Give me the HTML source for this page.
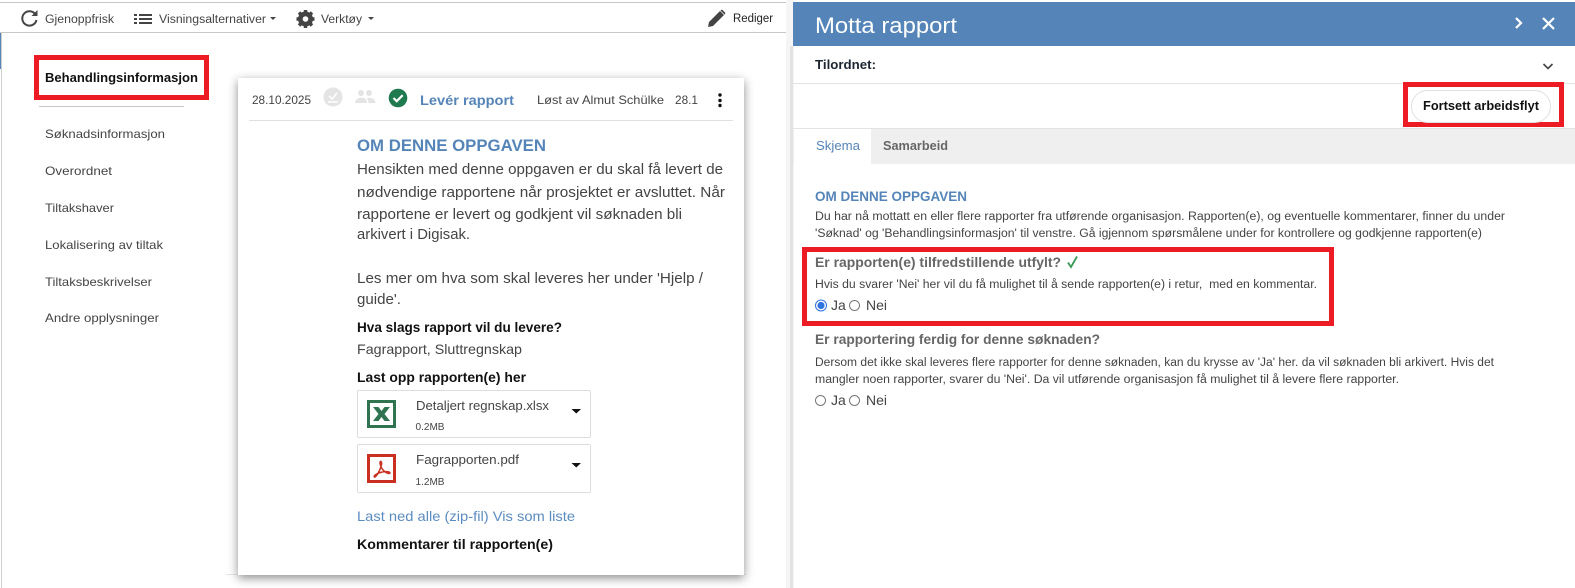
<!DOCTYPE html>
<html lang="no"><head><meta charset="utf-8"><title>Motta rapport</title>
<style>
html,body{margin:0;padding:0;background:#fff;width:1575px;height:588px;overflow:hidden}
svg{display:block}
text{font-family:"Liberation Sans",sans-serif;fill:#444;white-space:pre}
.b{font-weight:bold}
</style></head><body>
<svg width="1575" height="588" viewBox="0 0 1575 588" xmlns="http://www.w3.org/2000/svg">
<defs>
<filter id="sh" x="-10%" y="-10%" width="120%" height="120%"><feDropShadow dx="0" dy="3" stdDeviation="5" flood-color="#000" flood-opacity=".45"/></filter>
</defs>
<rect width="1575" height="588" fill="#fff"/>
<!-- left panel frame -->
<rect x="0" y="2" width="786" height="1" fill="#c8c8c8"/>
<rect x="0" y="32" width="786" height="1" fill="#c8c8c8"/>
<rect x="1" y="33" width="1" height="555" fill="#d0d0d0"/>
<rect x="0" y="33" width="1" height="36" fill="#5585b8"/>
<rect x="786" y="0" width="8" height="588" fill="#f5f5f5"/>
<rect x="790" y="46" width="3" height="542" fill="#e3e3e3"/>
<!-- toolbar -->
<path d="M35.500 14.500A7.200 7.200 0 1 0 36.500 20" fill="none" stroke="#444" stroke-width="2"/><path d="M31.500 16h6v-6z" fill="#444"/>
<text x="45" y="23" font-size="11.5" textLength="69" lengthAdjust="spacingAndGlyphs">Gjenoppfrisk</text>
<g fill="#444"><rect x="134" y="14" width="3" height="2"/><rect x="139" y="14" width="13" height="2"/><rect x="134" y="18" width="3" height="2"/><rect x="139" y="18" width="13" height="2"/><rect x="134" y="22" width="3" height="2"/><rect x="139" y="22" width="13" height="2"/></g>
<text x="159" y="23" font-size="11.5" textLength="107" lengthAdjust="spacingAndGlyphs">Visningsalternativer</text>
<path d="M270 17h6l-3 3z" fill="#444"/>
<circle cx="305.500" cy="19" r="5.500" fill="none" stroke="#444" stroke-width="4"/>
<path d="M305.500 10v18M296.500 19h18M299 12.500l13 13M312 12.500l-13 13" stroke="#444" stroke-width="3.500"/>
<circle cx="305.500" cy="19" r="2.800" fill="#fff"/>
<text x="321" y="23" font-size="11.5" textLength="41" lengthAdjust="spacingAndGlyphs">Verktøy</text>
<path d="M368 17h6l-3 3z" fill="#444"/>
<path d="M708 27l1-5 11-11 4 4-11 11z" fill="#444"/><path d="M720.500 10.500l1.500-1 3.500 3.500-1 1.500z" fill="#444"/>
<text x="733" y="22" font-size="11.5" textLength="40" lengthAdjust="spacingAndGlyphs" style="fill:#222">Rediger</text>
<!-- sidebar -->
<rect x="36.500" y="57.500" width="170" height="40" fill="none" stroke="#ed1c24" stroke-width="5"/>
<text x="45" y="82" font-size="12.5" class="b" textLength="153" lengthAdjust="spacingAndGlyphs" style="fill:#111">Behandlingsinformasjon</text>
<rect x="39" y="106" width="145" height="1" fill="#c8c8c8"/>
<text x="45" y="138" font-size="12" textLength="120" lengthAdjust="spacingAndGlyphs">Søknadsinformasjon</text>
<text x="45" y="175" font-size="12" textLength="67" lengthAdjust="spacingAndGlyphs">Overordnet</text>
<text x="45" y="212" font-size="12" textLength="69" lengthAdjust="spacingAndGlyphs">Tiltakshaver</text>
<text x="45" y="249" font-size="12" textLength="118" lengthAdjust="spacingAndGlyphs">Lokalisering av tiltak</text>
<text x="45" y="286" font-size="12" textLength="107" lengthAdjust="spacingAndGlyphs">Tiltaksbeskrivelser</text>
<text x="45" y="322" font-size="12" textLength="114" lengthAdjust="spacingAndGlyphs">Andre opplysninger</text>
<!-- card -->
<rect x="226" y="574" width="520" height="1" fill="#e6e6e6"/>
<rect x="238" y="78" width="506" height="497" fill="#fff" filter="url(#sh)"/>
<text x="252" y="104" font-size="12" textLength="59" lengthAdjust="spacingAndGlyphs">28.10.2025</text>
<circle cx="333" cy="97" r="9.500" fill="#e4e4e4"/><path d="M329 96l3 3 5-6M328 102h10" fill="none" stroke="#fff" stroke-width="1.500"/>
<g fill="#e4e4e4"><circle cx="361" cy="93" r="3"/><circle cx="369" cy="93" r="3"/><path d="M355 103c0-7 12-7 12-1v1zM368.500 103c0-3-1-4-2-5 4-1 9 1 9 5z"/></g>
<circle cx="398" cy="98" r="9.300" fill="#1f7a50"/><path d="M393.500 98l3.200 3.200 6-6" fill="none" stroke="#fff" stroke-width="2.200"/>
<text x="420" y="105" font-size="14" class="b" textLength="94" lengthAdjust="spacingAndGlyphs" style="fill:#5585b8">Levér rapport</text>
<text x="537" y="104" font-size="12" textLength="127" lengthAdjust="spacingAndGlyphs">Løst av Almut Schülke</text>
<text x="675" y="104" font-size="12" textLength="23" lengthAdjust="spacingAndGlyphs">28.1</text>
<g fill="#111"><circle cx="720" cy="95" r="1.700"/><circle cx="720" cy="100.500" r="1.700"/><circle cx="720" cy="105.500" r="1.700"/></g>
<rect x="249" y="120" width="484" height="1" fill="#e0e0e0"/>
<text x="357" y="151" font-size="16.500" class="b" textLength="189" lengthAdjust="spacingAndGlyphs" style="fill:#5585b8">OM DENNE OPPGAVEN</text>
<text x="357" y="174" font-size="14.500" textLength="366" lengthAdjust="spacingAndGlyphs">Hensikten med denne oppgaven er du skal få levert de</text>
<text x="357" y="197" font-size="14.500" textLength="368" lengthAdjust="spacingAndGlyphs">nødvendige rapportene når prosjektet er avsluttet. Når</text>
<text x="357" y="219" font-size="14.500" textLength="325" lengthAdjust="spacingAndGlyphs">rapportene er levert og godkjent vil søknaden bli</text>
<text x="357" y="239" font-size="14.500" textLength="113" lengthAdjust="spacingAndGlyphs">arkivert i Digisak.</text>
<text x="357" y="283" font-size="14.500" textLength="346" lengthAdjust="spacingAndGlyphs">Les mer om hva som skal leveres her under 'Hjelp /</text>
<text x="357" y="304" font-size="14.500" textLength="44" lengthAdjust="spacingAndGlyphs">guide'.</text>
<text x="357" y="354" font-size="14" textLength="165" lengthAdjust="spacingAndGlyphs">Fagrapport, Sluttregnskap</text>
<text x="357" y="332" font-size="14" class="b" textLength="205" lengthAdjust="spacingAndGlyphs" style="fill:#111">Hva slags rapport vil du levere?</text>
<text x="357" y="382" font-size="14" class="b" textLength="169" lengthAdjust="spacingAndGlyphs" style="fill:#111">Last opp rapporten(e) her</text>
<!-- files -->
<rect x="357.500" y="390.500" width="233" height="47" rx="1.500" fill="#fff" stroke="#ddd"/>
<rect x="357.500" y="444.500" width="233" height="48" rx="1.500" fill="#fff" stroke="#ddd"/>
<rect x="368.500" y="401.500" width="26" height="25" fill="#fff" stroke="#2f7350" stroke-width="3"/>
<path d="M373 407h5.500l3 4 3-4h5.500l-5.500 7 5.500 7h-5.500l-3-4-3 4h-5.500l5.500-7z" fill="#2f7350"/>
<rect x="368.500" y="455.500" width="26" height="26" fill="#fff" stroke="#c9301f" stroke-width="3"/>
<path d="M381 461.500c-1.500-.5-1.500 3 1 7 2 3 4 4.500 6.500 5 2 .3 2-1.500-.5-1.800-4-.3-9 .8-12.500 3-2.500 1.800-1 3.300.5 1.500 2-2.500 4.500-7.500 5.500-11.500.3-1.500 0-3-.5-3.200z" fill="none" stroke="#c9301f" stroke-width="1.500"/>
<text x="416" y="410" font-size="13" textLength="133" lengthAdjust="spacingAndGlyphs">Detaljert regnskap.xlsx</text>
<text x="415.500" y="430" font-size="10" textLength="29" lengthAdjust="spacingAndGlyphs">0.2MB</text>
<text x="416" y="464" font-size="13" textLength="103" lengthAdjust="spacingAndGlyphs">Fagrapporten.pdf</text>
<text x="415.500" y="485" font-size="10" textLength="29" lengthAdjust="spacingAndGlyphs">1.2MB</text>
<path d="M571.500 409h9.500l-4.750 4.500z" fill="#111"/><path d="M571.500 463h9.500l-4.750 4.500z" fill="#111"/>
<text x="357" y="521" font-size="14" textLength="218" lengthAdjust="spacingAndGlyphs" style="fill:#5b8cc0">Last ned alle (zip-fil) Vis som liste</text>
<text x="357" y="549" font-size="14" class="b" textLength="196" lengthAdjust="spacingAndGlyphs" style="fill:#111">Kommentarer til rapporten(e)</text>
<!-- right panel -->
<rect x="793" y="2" width="782" height="44" fill="#5585b8"/>
<text x="815" y="33" font-size="22" textLength="142" lengthAdjust="spacingAndGlyphs" style="fill:#fff">Motta rapport</text>
<path d="M1517 18l5 5-5 5" fill="none" stroke="#fff" stroke-width="2.200" transform="translate(-1,0)"/>
<path d="M1543 18l11 11M1554 18l-11 11" stroke="#fff" stroke-width="2.200" fill="none"/>
<text x="815" y="69" font-size="12.500" class="b" textLength="61" lengthAdjust="spacingAndGlyphs" style="fill:#1c2733">Tilordnet:</text>
<path d="M1543.500 64l4.500 4.500 4.500-4.500" fill="none" stroke="#444" stroke-width="1.600"/>
<rect x="793" y="83" width="782" height="1" fill="#e3e3e3"/>
<rect x="793" y="128" width="782" height="36" fill="#efefef"/>
<rect x="793" y="128" width="782" height="1" fill="#e3e3e3"/>
<rect x="794" y="129" width="77" height="36" fill="#fff"/>
<text x="816" y="150" font-size="13" textLength="44" lengthAdjust="spacingAndGlyphs" style="fill:#5585b8">Skjema</text>
<text x="883" y="150" font-size="13" class="b" textLength="65" lengthAdjust="spacingAndGlyphs" style="fill:#666">Samarbeid</text>
<rect x="1405.500" y="84.500" width="156" height="40" fill="#fff" stroke="#ed1c24" stroke-width="5"/>
<rect x="1411.500" y="90.500" width="139" height="32" rx="16" fill="#fff" stroke="#e0e0e0"/>
<text x="1423" y="110" font-size="12.500" class="b" textLength="116" lengthAdjust="spacingAndGlyphs" style="fill:#111">Fortsett arbeidsflyt</text>
<text x="815" y="201" font-size="14" class="b" textLength="152" lengthAdjust="spacingAndGlyphs" style="fill:#5585b8">OM DENNE OPPGAVEN</text>
<text x="815" y="220" font-size="11.500" textLength="690" lengthAdjust="spacingAndGlyphs">Du har nå mottatt en eller flere rapporter fra utførende organisasjon. Rapporten(e), og eventuelle kommentarer, finner du under</text>
<text x="815" y="237" font-size="11.500" textLength="667" lengthAdjust="spacingAndGlyphs">'Søknad' og 'Behandlingsinformasjon' til venstre. Gå igjennom spørsmålene under for kontrollere og godkjenne rapporten(e)</text>
<rect x="804.500" y="249.500" width="527" height="74" fill="none" stroke="#ed1c24" stroke-width="5"/>
<text x="815" y="267" font-size="14" class="b" textLength="246" lengthAdjust="spacingAndGlyphs" style="fill:#666">Er rapporten(e) tilfredstillende utfylt?</text>
<path d="M1068 262.500l3 4.500 6-10.500" fill="none" stroke="#3a9a54" stroke-width="1.800"/>
<text x="815" y="288" font-size="11.500" textLength="502" lengthAdjust="spacingAndGlyphs">Hvis du svarer 'Nei' her vil du få mulighet til å sende rapporten(e) i retur,  med en kommentar.</text>
<circle cx="821" cy="305.500" r="5.500" fill="#fff" stroke="#2f74e0" stroke-width="1"/><circle cx="821" cy="305.500" r="3.600" fill="#2f74e0"/>
<text x="831" y="310" font-size="14">Ja</text>
<circle cx="854.500" cy="305.500" r="5" fill="#fff" stroke="#777"/>
<text x="866" y="310" font-size="14" textLength="21" lengthAdjust="spacingAndGlyphs">Nei</text>
<text x="815" y="344" font-size="14" class="b" textLength="285" lengthAdjust="spacingAndGlyphs" style="fill:#666">Er rapportering ferdig for denne søknaden?</text>
<text x="815" y="366" font-size="11.500" textLength="679" lengthAdjust="spacingAndGlyphs">Dersom det ikke skal leveres flere rapporter for denne søknaden, kan du krysse av 'Ja' her. da vil søknaden bli arkivert. Hvis det</text>
<text x="815" y="383" font-size="11.500" textLength="584" lengthAdjust="spacingAndGlyphs">mangler noen rapporter, svarer du 'Nei'. Da vil utførende organisasjon få mulighet til å levere flere rapporter.</text>
<circle cx="820.500" cy="400.500" r="5" fill="#fff" stroke="#777"/>
<text x="831" y="405" font-size="14">Ja</text>
<circle cx="854.500" cy="400.500" r="5" fill="#fff" stroke="#777"/>
<text x="866" y="405" font-size="14" textLength="21" lengthAdjust="spacingAndGlyphs">Nei</text>
</svg>
</body></html>
